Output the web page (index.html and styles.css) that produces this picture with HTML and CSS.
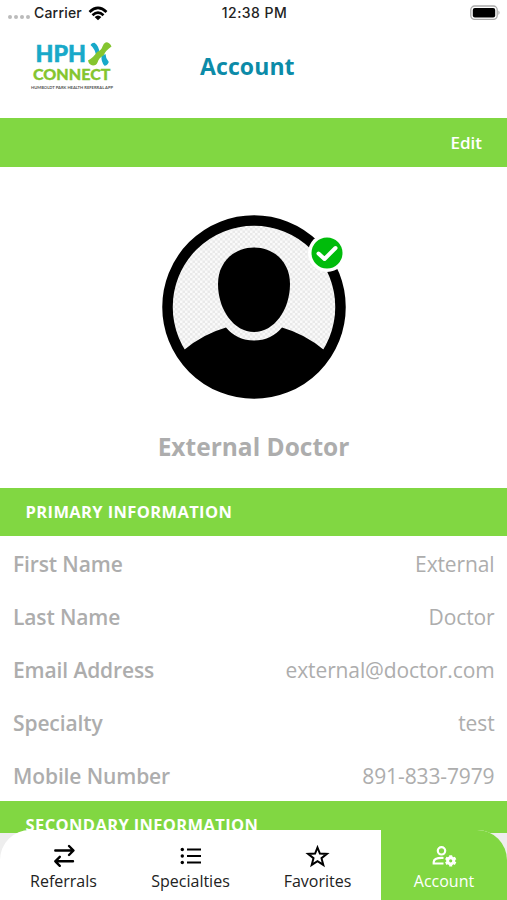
FILE: index.html
```html
<!DOCTYPE html>
<html lang="en">
<head>
<meta charset="utf-8">
<title>Account</title>
<link rel="stylesheet" href="styles.css">
</head>
<body>
<div class="screen">
  <div class="status">
    <div class="carrier">
      <span class="signal"><i></i><i></i><i></i><i></i></span>
      <span class="name">Carrier</span>
      <svg class="wifi" width="20" height="15" viewBox="0 0 20 15"><g fill="none" stroke="#000" stroke-width="2.700"><path d="M1.500 5.900Q10-2 18.500 5.900"/><path d="M4.500 9.200Q10 4.200 15.500 9.200"/></g><path d="M6.600 10.900Q10 7.900 13.400 10.900L10 14.300Z"/></svg>
    </div>
    <time>12:38 PM</time>
    <svg class="battery" width="31" height="16" viewBox="0 0 31 16"><rect x=".8" y="1" width="26.400" height="13.400" rx="3.800" fill="#fff" stroke="#aaa" stroke-width="1.300"/><rect x="2.800" y="3" width="22.400" height="9.400" rx="2"/><path d="M28.500 5.500q2 2.200 0 4.400z" fill="#999"/></svg>
  </div>

  <header class="header">
    <svg class="logo" width="86" height="54" viewBox="0 0 86 54">
      <text class="logo-hph" x="5.500" y="24" textLength="50.500" lengthAdjust="spacingAndGlyphs">HPH</text>
      <path d="M60.500 7Q62 4.500 64.500 4.800Q69 8 69.500 15L66 17Q65 11 60.500 7Z" fill="#18a9c9"/>
      <path d="M71.500 18L75.500 16Q75.500 20 78.800 24Q77.500 27.500 74.500 27.800Q71 24 71.500 18Z" fill="#18a9c9"/>
      <path d="M81.500 8.500Q80 4.500 76 4.300Q73.500 5 72.500 8.500Q71.500 12 67 14Q64 19 58 22.500Q59 27 63 27.500Q66.500 27.500 67.500 24.500Q69 19.500 73.500 17.500Q76 12 81.500 8.500Z" fill="#84c52f"/>
      <text class="logo-connect" x="3" y="42.300" textLength="77.500" lengthAdjust="spacingAndGlyphs">CONNECT</text>
      <text class="logo-tag" x="1" y="50.500" textLength="82" lengthAdjust="spacingAndGlyphs">HUMBOLDT PARK HEALTH REFERRAL APP</text>
    </svg>
    <h1>Account</h1>
  </header>

  <div class="band edit"><span>Edit</span></div>

  <section class="profile">
    <svg class="avatar" width="188" height="188" viewBox="0 0 188 188">
      <defs>
        <pattern id="check" width="5" height="5" patternUnits="userSpaceOnUse"><rect width="5" height="5" fill="#fafafa"/><path d="M0 0h2.500v2.500H0zM2.500 2.500H5V5H2.500z" fill="#e9e9e9"/></pattern>
        <clipPath id="disc"><circle cx="94" cy="94" r="90"/></clipPath>
      </defs>
      <circle cx="94" cy="94" r="86.500" fill="url(#check)" stroke="#000" stroke-width="10.500"/>
      <g clip-path="url(#disc)"><path d="M4 137H24Q43 121 66 114.500Q77 127.500 94 127.500Q111 127.500 122 114.500Q145 121 164 137H184V188H4Z"/></g>
      <path d="M94 34.500C114 34.500 130 49 130 71C130 97 114 119 94 119C74 119 58 97 58 71C58 49 74 34.500 94 34.500Z"/>
      <circle cx="167" cy="40" r="19" fill="#fff"/>
      <circle cx="167" cy="40" r="15.500" fill="#00bc0b"/>
      <path d="M158.500 40.500L164.500 46L175.500 35" fill="none" stroke="#fff" stroke-width="4" stroke-linecap="round" stroke-linejoin="round"/>
    </svg>
    <h2>External Doctor</h2>
  </section>

  <div class="band"><h3>PRIMARY INFORMATION</h3></div>
  <dl class="fields">
    <div><dt>First Name</dt><dd>External</dd></div>
    <div><dt>Last Name</dt><dd>Doctor</dd></div>
    <div><dt>Email Address</dt><dd>external@doctor.com</dd></div>
    <div><dt>Specialty</dt><dd>test</dd></div>
    <div><dt>Mobile Number</dt><dd>891-833-7979</dd></div>
  </dl>
  <div class="band secondary"><h3>SECONDARY INFORMATION</h3></div>

  <nav class="tabs">
    <a class="tab"><svg width="26" height="26" viewBox="0 0 26 26"><g fill="none" stroke="#000" stroke-width="2.400" stroke-linecap="round" stroke-linejoin="round"><path d="M4.300 7.500H22M18 3L22.500 7.500L18 12M22 18.300H4.300M8.800 13.800L4.300 18.300L8.800 22.800"/></g></svg><span>Referrals</span></a>
    <a class="tab"><svg width="26" height="26" viewBox="0 0 26 26"><path d="M9 6.500H23M9 13H23M9 19.500H23" stroke="#000" stroke-width="2"/><g><circle cx="4.300" cy="6.500" r="1.700"/><circle cx="4.300" cy="13" r="1.700"/><circle cx="4.300" cy="19.500" r="1.700"/></g></svg><span>Specialties</span></a>
    <a class="tab"><svg width="26" height="26" viewBox="0 0 26 26"><path d="M12.500 4.500L14.900 10.600L21.900 10.900L16.500 15.200L18.300 21.900L12.500 18.200L6.700 21.900L8.500 15.200L3.100 10.900L10.100 10.600Z" fill="none" stroke="#000" stroke-width="2"/></svg><span>Favorites</span></a>
    <a class="tab active"><svg width="26" height="26" viewBox="0 0 26 26"><g fill="none" stroke="#fff" stroke-width="2.200"><circle cx="10.500" cy="7.800" r="3.700"/><path d="M12.500 15Q3 14.600 2.700 19V20.500H12.500"/></g><g fill="none" stroke="#fff"><circle cx="19.700" cy="17.800" r="3.100" stroke-width="3"/><path d="M19.700 12.200V14M19.700 21.600V23.400M14.800 15L16.400 15.900M23 19.700L24.600 20.600M24.600 15L23 15.900M16.400 19.700L14.800 20.600" stroke-width="3"/></g></svg><span>Account</span></a>
  </nav>
</div>
</body>
</html>
```
FILE: styles.css
```css
* { box-sizing: border-box; margin: 0; padding: 0; }
body { background: #fff; font-family: "Open Sans", sans-serif; }
.screen { width: 507px; height: 900px; overflow: hidden; display: flex; flex-direction: column; background: #eee; }
.screen > * { flex-shrink: 0; }

.status { height: 26px; display: grid; grid-template-columns: 1fr auto 1fr; align-items: center; padding: 0 6px 0 8px; background: #fff; font: 500 14px/26px Inter, sans-serif; color: #222; }
.status time { letter-spacing: .45px; }
.carrier { display: flex; align-items: center; gap: 6px; }
.carrier .name { letter-spacing: .2px; margin-left: -1px; }
.signal { display: flex; gap: 2px; padding-top: 8px; margin-right: -1px; }
.signal i { width: 4px; height: 4px; border-radius: 50%; background: #bbb; }
.battery { justify-self: end; }

.header { height: 92px; display: grid; grid-template-columns: 200px auto 1fr; background: #fff; padding-top: 12px; }
.logo { margin-left: 30px; }
.logo-hph { font: 900 22.500px Lato, sans-serif; fill: #18a9c9; stroke: #18a9c9; stroke-width: .5; }
.logo-connect { font: 900 15.500px Lato, sans-serif; fill: #84c52f; stroke: #84c52f; stroke-width: .3; }
.logo-tag { font: 700 4px Lato, sans-serif; fill: #555; }
.header h1 { font-size: 23px; font-weight: 700; line-height: 56px; letter-spacing: .1px; color: #0c8ba8; }

.band { height: 48px; display: flex; align-items: center; padding: 0 25px; background: #81d742; color: #fff; }
.band h3 { font-size: 16.500px; font-weight: 700; line-height: 24px; letter-spacing: .37px; margin-left: .6px; white-space: nowrap; }
.edit { justify-content: flex-end; height: 49px; font-size: 17px; font-weight: 600; }

.profile { height: 321px; padding-top: 46px; background: #fff; display: flex; flex-direction: column; align-items: center; }
.profile h2 { font-size: 24.500px; font-weight: 700; line-height: 34px; color: #adadad; margin-top: 29px; }

.fields { background: #fff; height: 265px; }
.fields div { height: 53px; display: flex; justify-content: space-between; align-items: center; padding: 2px 12.500px 0 13px; font-size: 21px; color: #adadad; }
.fields dt { font-weight: 600; letter-spacing: -.12px; }
.fields dd { font-weight: 400; letter-spacing: -.12px; }
.secondary { height: 32px; overflow: hidden; align-items: flex-start; padding-top: 12px; }

.tabs { height: 70px; margin-top: -3px; z-index: 1; display: grid; grid-template-columns: repeat(3, 127px) 1fr; border-radius: 30px 30px 0 0; overflow: hidden; background: #fff; }
.tab { display: flex; flex-direction: column; align-items: center; padding-top: 13px; font-size: 16px; line-height: 24px; color: #222; }
.active { background: #81d742; color: #fff; }
```
